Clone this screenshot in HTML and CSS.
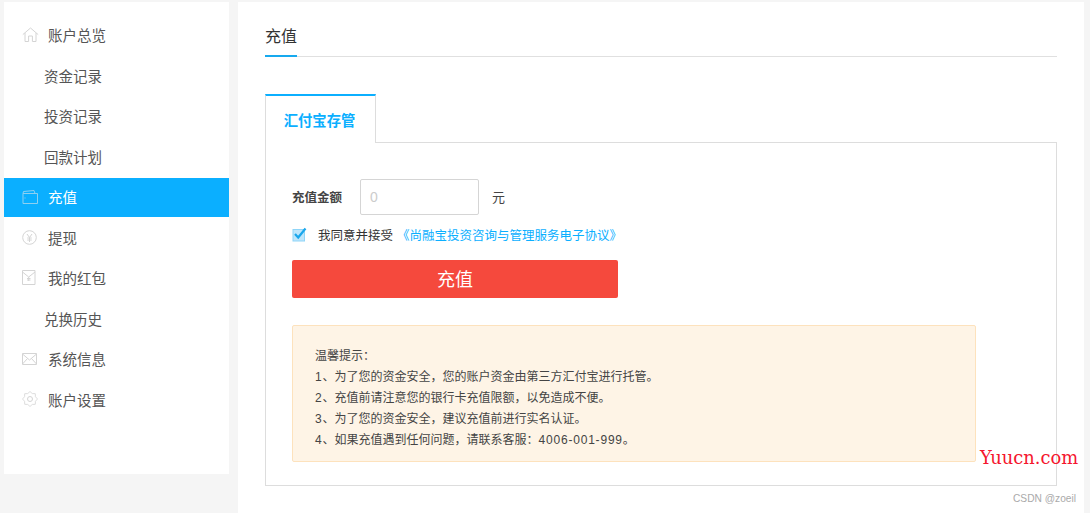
FILE: index.html
```html
<!DOCTYPE html>
<html lang="zh-CN">
<head>
<meta charset="utf-8">
<title>充值</title>
<link rel="stylesheet" href="styles.css">
</head>
<body>
<div class="page">
  <aside class="sidebar">
    <nav class="menu">
      <a class="item"><svg class="icon" width="17" height="15" viewBox="0 0 17 15"><path d="M.8 7.6 8.5 1l7.700 6.600M3 6v8.500h3.600V9h3.800v5.500H14V6" /></svg><span>账户总览</span></a>
      <a class="item sub"><span>资金记录</span></a>
      <a class="item sub"><span>投资记录</span></a>
      <a class="item sub"><span>回款计划</span></a>
      <a class="item active"><svg class="icon" width="17" height="14" viewBox="0 0 17 14"><path d="M1 3.500h14.500v10H1zM1 3.500 1.500 1.500 12 .5 13 3.500M2.500 8h1" /></svg><span>充值</span></a>
      <a class="item"><svg class="icon" width="17" height="15" viewBox="0 0 17 15"><circle cx="7.500" cy="7.500" r="6.800"/><path d="M5 4l2.500 3.500L10 4M7.500 7.500V12M5.200 8h4.600M5.200 10h4.600"/></svg><span>提现</span></a>
      <a class="item"><svg class="icon" width="17" height="15" viewBox="0 0 17 15"><path d="M.5.500h12.500v14H.5zM.5 2l6.200 5L13 2M6.700 7v4M5 8.500h3.500M5 10h3.500"/></svg><span>我的红包</span></a>
      <a class="item sub"><span>兑换历史</span></a>
      <a class="item"><svg class="icon" width="17" height="12" viewBox="0 0 17 12"><path d="M.5.500h14v11H.5zM.5 1l7 6 7-6M.5 11l5-5.500M14.500 11l-5-5.500"/></svg><span>系统信息</span></a>
      <a class="item"><svg class="icon" width="17" height="16" viewBox="0 0 17 16"><polygon class="gear" points="15.500,8 13.450,10.260 13.300,13.300 10.260,13.450 8,15.500 5.740,13.450 2.700,13.300 2.550,10.260 .5,8 2.550,5.740 2.700,2.700 5.740,2.550 8,.5 10.260,2.550 13.300,2.700 13.450,5.740"/><circle cx="8" cy="8" r="2.500"/></svg><span>账户设置</span></a>
    </nav>
  </aside>
  <main class="main">
    <div class="heading"><h1 class="title">充值</h1></div>
    <div class="tabs"><div class="tab">汇付宝存管</div></div>
    <section class="panel">
      <div class="amount">
        <label class="label">充值金额</label>
        <div class="input">0</div>
        <span class="unit">元</span>
      </div>
      <div class="agree">
        <svg class="check" width="15" height="15" viewBox="0 0 15 15"><rect x="1" y="2.500" width="11.500" height="11.500" fill="#bfe6fb" stroke="#8fd5f8"/><path class="tick" d="M3 7l3.200 3.500L13.500 1.500"/></svg>
        <span class="agree-text">我同意并接受</span>
        <a class="link">《尚融宝投资咨询与管理服务电子协议》</a>
      </div>
      <button class="submit" type="button">充值</button>
      <div class="notice">
        <p>温馨提示：</p>
        <p><span class="num">1</span>、为了您的资金安全，您的账户资金由第三方汇付宝进行托管。</p>
        <p><span class="num">2</span>、充值前请注意您的银行卡充值限额，以免造成不便。</p>
        <p><span class="num">3</span>、为了您的资金安全，建议充值前进行实名认证。</p>
        <p><span class="num">4</span>、如果充值遇到任何问题，请联系客服：<span class="num">4006-001-999</span>。</p>
      </div>
    </section>
  </main>
</div>
<div class="mark-yuucn">Yuucn.com</div>
<div class="mark-csdn">CSDN @zoeil</div>
</body>
</html>
```
FILE: styles.css
```css
* { box-sizing: border-box; }
html, body { margin: 0; height: 100%; }
body {
  background: #f5f5f5;
  font-family: "Liberation Sans", "Noto Sans CJK SC", sans-serif;
  color: #444;
  overflow: hidden;
  position: relative;
}
.page {
  display: flex;
  height: 513px;
  padding: 2px 6px 0 4px;
  gap: 9px;
  align-items: flex-start;
}
.sidebar {
  width: 225px;
  height: 472px;
  background: #fff;
  padding-top: 14px;
  flex: none;
}
.menu { display: flex; flex-direction: column; gap: 1.500px; }
.item {
  height: 39px;
  display: flex;
  align-items: center;
  font-size: 14.500px;
  color: #555;
  padding: 0 0 1.500px 18px;
}
.item.sub { padding-left: 40px; }
.item .icon { width: 17px; margin-right: 9px; flex: none; fill: none; stroke: #d4d4d4; stroke-width: 1; }
.item .gear { stroke: #dedede; stroke-linejoin: round; }
.item.active { background: #0bafff; color: #fff; }
.item.active .icon { stroke: #8fd0f0; }
.main {
  width: 846px;
  height: 511px;
  background: #fff;
  padding: 0 27px 0 27px;
  flex: none;
}
.heading {
  height: 55px;
  border-bottom: 1px solid #e0e0e0;
  display: flex;
  align-items: flex-end;
}
.title {
  margin: 0 0 -1px;
  height: 55px;
  padding-top: 23px;
  width: 32px;
  font-size: 16px;
  line-height: 24px;
  font-weight: 400;
  color: #333;
  border-bottom: 2px solid #17a9ee;
}
.tabs { display: flex; margin-top: 37px; height: 49px; position: relative; }
.tab {
  width: 111px;
  height: 49px;
  background: #fff;
  border-top: 2px solid #0bafff;
  border-left: 1px solid #ddd;
  border-right: 1px solid #ddd;
  color: #0bafff;
  font-size: 14.300px;
  font-weight: 700;
  text-align: center;
  line-height: 50px;
  padding-right: 2px;
  position: relative;
  z-index: 1;
}
.panel {
  margin-top: -1px;
  height: 344px;
  border: 1px solid #ddd;
  padding: 36px 26px 0;
}
.amount { display: flex; align-items: center; height: 36px; }
.label { font-size: 12.500px; font-weight: 700; color: #444; width: 68px; padding-bottom: 2px; }
.input {
  width: 119px;
  height: 36px;
  border: 1px solid #d5d5d5;
  border-radius: 2px;
  font-size: 14px;
  line-height: 34px;
  padding-left: 9px;
  color: #ccc;
}
.unit { font-size: 13px; margin-left: 13px; color: #444; padding-bottom: 2px; }
.agree { display: flex; align-items: center; height: 20px; margin-top: 9px; font-size: 12.500px; }
.check { flex: none; margin-right: 11px; }
.tick { fill: none; stroke: #1aa7ec; stroke-width: 2.200; }
.agree-text { color: #333; }
.link { color: #0bafff; margin-left: 4px; }
.submit {
  display: block;
  margin-top: 16px;
  width: 326px;
  height: 38px;
  border: 0;
  border-radius: 2px;
  background: #f5493d;
  color: #fff;
  font-family: inherit;
  font-size: 18px;
  padding: 0 0 2px;
}
.notice {
  margin-top: 27px;
  width: 684px;
  height: 137px;
  background: #fef4e6;
  border: 1px solid #fde2bd;
  border-radius: 2px;
  padding: 20px 22px 0;
  font-size: 12px;
  line-height: 21px;
  color: #444;
}
.notice p { margin: 0; }
.num { letter-spacing: .8px; }
.mark-yuucn {
  position: absolute;
  left: 980px;
  top: 448px;
  font-family: "DejaVu Serif", serif;
  font-size: 17.900px;
  line-height: 20px;
  color: #f5162e;
}
.mark-csdn {
  position: absolute;
  left: 1013px;
  top: 492px;
  font-size: 10.200px;
  line-height: 14px;
  color: #aaa;
}
```
